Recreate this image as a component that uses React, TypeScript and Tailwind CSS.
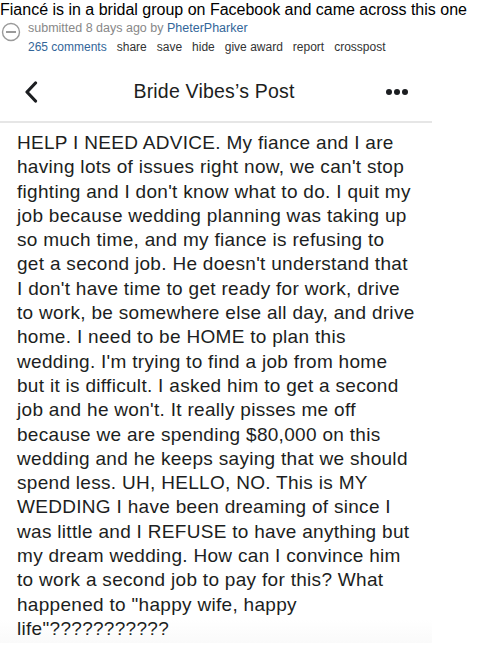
import React from "react";

const lines = [
  "HELP I NEED ADVICE. My fiance and I are",
  "having lots of issues right now, we can't stop",
  "fighting and I don't know what to do. I quit my",
  "job because wedding planning was taking up",
  "so much time, and my fiance is refusing to",
  "get a second job. He doesn't understand that",
  "I don't have time to get ready for work, drive",
  "to work, be somewhere else all day, and drive",
  "home. I need to be HOME to plan this",
  "wedding. I'm trying to find a job from home",
  "but it is difficult. I asked him to get a second",
  "job and he won't. It really pisses me off",
  "because we are spending $80,000 on this",
  "wedding and he keeps saying that we should",
  "spend less. UH, HELLO, NO. This is MY",
  "WEDDING I have been dreaming of since I",
  "was little and I REFUSE to have anything but",
  "my dream wedding. How can I convince him",
  "to work a second job to pay for this? What",
  'happened to "happy wife, happy',
  'life"???????????',
];

const actions = ["share", "save", "hide", "give award", "report", "crosspost"];

export default function App() {
  return (
    <div className="w-[478px] h-[650px] overflow-hidden bg-white font-['Liberation_Sans',Arial,sans-serif]">
      {/* reddit title block */}
      <div className="text-[16px] leading-[20px] text-black whitespace-nowrap">
        Fiancé is in a bridal group on Facebook and came across this one
      </div>
      <div className="flex items-start">
        <svg width="20" height="20" viewBox="0 0 20 20" className="ml-[1px] mt-[2px] shrink-0">
          <circle cx="10" cy="10" r="8.5" fill="none" stroke="#9a9a9a" strokeWidth="1.4" />
          <rect x="5" y="9" width="10" height="2" fill="#9a9a9a" />
        </svg>
        <div className="ml-[7px] flex flex-col">
          <div className="text-[12.5px] leading-[16px] text-[#888] whitespace-nowrap">
            submitted 8 days ago by <span className="text-[#369]">PheterPharker</span>
          </div>
          <div className="mt-[3px] flex gap-[10px] text-[12px] leading-[16px] text-[#333] whitespace-nowrap">
            <span className="text-[#369]">265 comments</span>
            {actions.map((a) => (
              <span key={a}>{a}</span>
            ))}
          </div>
        </div>
      </div>

      {/* facebook screenshot */}
      <div className="mt-[8px] w-[432px] h-[580px] bg-gradient-to-b from-white from-[96%] to-[#fafafa]">
        <div className="h-[60px] flex items-center justify-between px-[24px] border-b-[2px] border-[#e6e6e6]">
          <svg width="14" height="22" viewBox="0 0 14 22">
            <path d="M11.5 2 L3 11 L11.5 20" fill="none" stroke="#1c1e21" strokeWidth="3.2" strokeLinecap="round" strokeLinejoin="round" />
          </svg>
          <div className="text-[19.5px] tracking-[0.2px] text-[#1c1e21] ml-[4px]">Bride Vibes’s Post</div>
          <div className="flex gap-[2px]">
            <span className="w-[6px] h-[6px] rounded-full bg-[#1c1e21]" />
            <span className="w-[6px] h-[6px] rounded-full bg-[#1c1e21]" />
            <span className="w-[6px] h-[6px] rounded-full bg-[#1c1e21]" />
          </div>
        </div>
        <div className="pl-[17px] pt-[8px] text-[19px] tracking-[0.3px] leading-[24.3px] text-[#1c1e21]">
          {lines.map((l, i) => (
            <div key={i} className="whitespace-nowrap">
              {l}
            </div>
          ))}
        </div>
      </div>
    </div>
  );
}
